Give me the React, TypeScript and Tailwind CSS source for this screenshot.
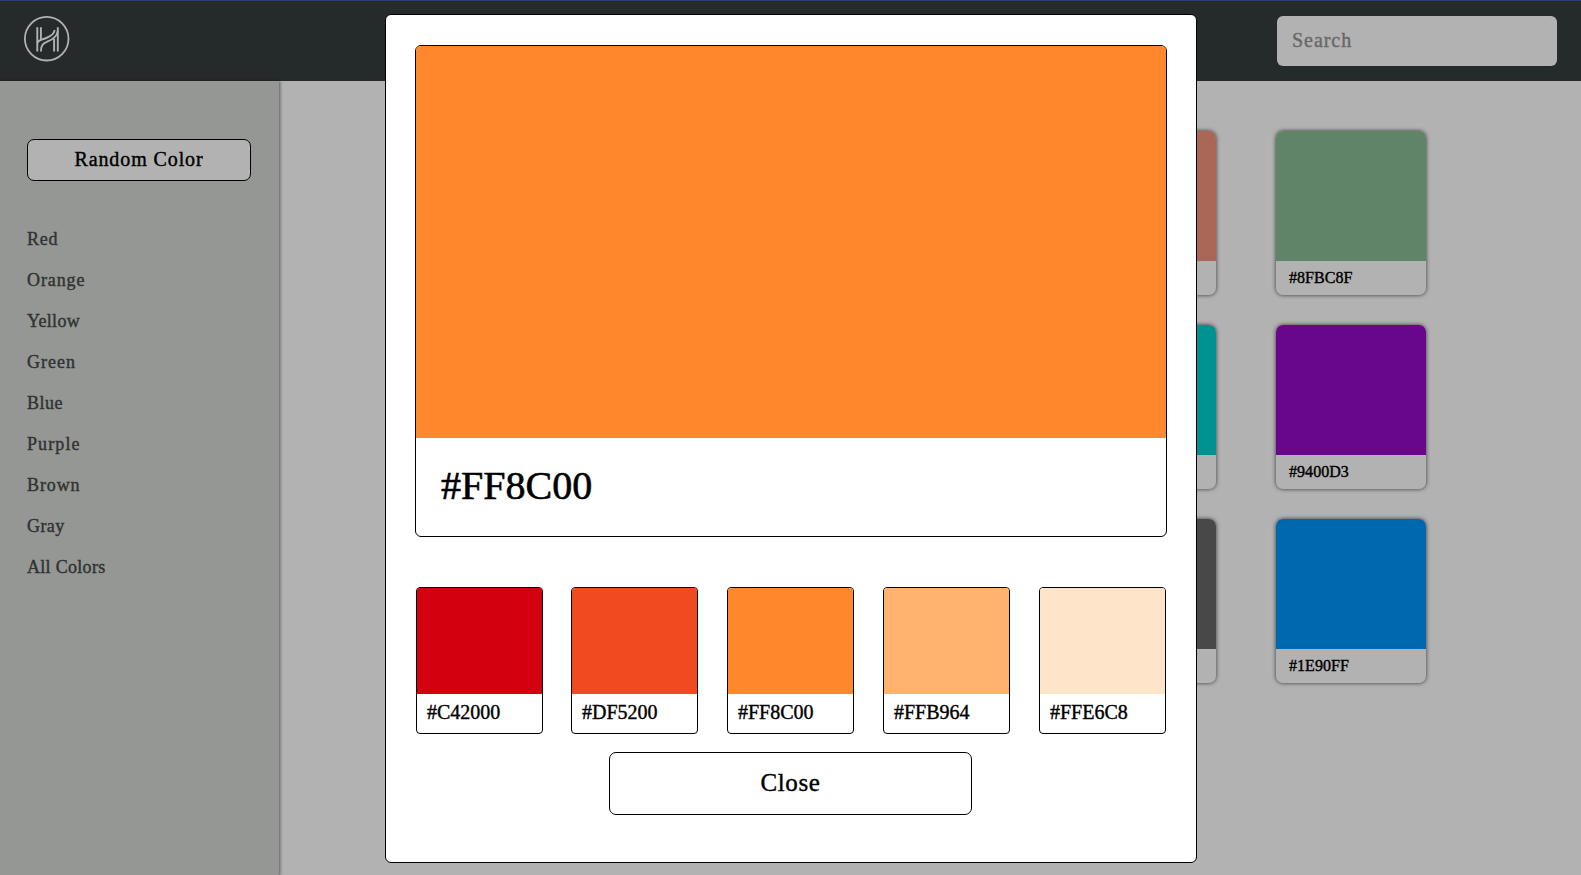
import React from "react";

const navItems = [
  { label: "Red", tracking: "tracking-[0.7px]" },
  { label: "Orange", tracking: "tracking-[0.9px]" },
  { label: "Yellow", tracking: "tracking-[0.3px]" },
  { label: "Green", tracking: "tracking-[1px]" },
  { label: "Blue", tracking: "tracking-[0.5px]" },
  { label: "Purple", tracking: "tracking-[1.1px]" },
  { label: "Brown", tracking: "tracking-[0.9px]" },
  { label: "Gray", tracking: "tracking-[0.4px]" },
  { label: "All Colors", tracking: "tracking-[0.3px]" },
];

const swatches = [
  { fill: "bg-[#f4937b]", code: "" },
  { fill: "bg-[#89bd96]", code: "#8FBC8F" },
  { fill: "bg-[#00d2cf]", code: "" },
  { fill: "bg-[#970bc8]", code: "#9400D3" },
  { fill: "bg-[#686868]", code: "" },
  { fill: "bg-[#0095fb]", code: "#1E90FF" },
];

const shades = [
  { fill: "bg-[#d3000f]", code: "#C42000" },
  { fill: "bg-[#f14a1f]", code: "#DF5200" },
  { fill: "bg-[#ff882d]", code: "#FF8C00" },
  { fill: "bg-[#ffb36f]", code: "#FFB964" },
  { fill: "bg-[#fee5ca]", code: "#FFE6C8" },
];

function Logo() {
  return (
    <svg className="size-[46px]" viewBox="0 0 46 46" fill="none" stroke="white" strokeWidth="1.9">
      <circle cx="22.7" cy="22.7" r="21.8" strokeWidth="1.8" />
      <path d="M13.3 11.2V35.5M16.9 11.2V23.2M30.1 22.5V35.5M33.8 11.2V35.5" />
      <path d="M13.3 27C14.3 23.8 18.5 23.5 22.3 22C27.2 20 30.3 17.5 30.6 14" />
      <path d="M16.9 35.5C16.9 28.8 19.3 27.3 23.8 25.4C29 23.3 33.2 20.5 33.8 15" />
    </svg>
  );
}

function Header() {
  return (
    <header className="flex h-[81px] shrink-0 items-start justify-between border-t border-[#435ba4] bg-[#363d3d] px-6 pt-[15px]">
      <Logo />
      <input
        className="h-[50px] w-[280px] rounded-[6px] bg-white px-[15px] pb-[2px] text-[20px] tracking-[0.95px] outline-none placeholder:text-[#969696] placeholder:opacity-100"
        placeholder="Search"
      />
    </header>
  );
}

function Sidebar() {
  return (
    <aside className="z-10 w-[279px] shrink-0 bg-[#d5d8d5] px-[27px] pt-[58px] shadow-[1px_0_3px_rgba(0,0,0,0.5)]">
      <button className="flex h-[42px] w-[224px] items-center justify-center rounded-[7px] border border-black bg-white pb-[2px] text-[20px] leading-6 tracking-[0.9px]">
        Random Color
      </button>
      <nav className="mt-[38px] flex flex-col">
        {navItems.map((item) => (
          <a key={item.label} className={`h-[41px] text-[18px] leading-[41px] text-[#454a48] ${item.tracking}`}>
            {item.label}
          </a>
        ))}
      </nav>
    </aside>
  );
}

function Gallery() {
  return (
    <main className="flex grow justify-end bg-white pr-[155px] pt-[50px]">
      <div className="grid h-fit grid-cols-[150px_150px] gap-x-[60px] gap-y-[30px]">
        {swatches.map((s) => (
          <div key={s.fill} className="h-[164px] overflow-hidden rounded-[7px] bg-white shadow-[0_0_4px_rgba(0,0,0,0.7)]">
            <div className={`h-[130px] ${s.fill}`} />
            <p className="px-[13px] text-[16px] leading-[33px] tracking-[0.05px]">{s.code}</p>
          </div>
        ))}
      </div>
    </main>
  );
}

function ColorDialog() {
  return (
    <div className="fixed inset-0 z-20 bg-black/30 pl-[385px] pt-[14px]">
      <div
        role="dialog"
        className="flex h-[849px] w-[812px] flex-col items-center rounded-[6px] border border-black bg-white pt-[30px]"
      >
        <section className="h-[492px] w-[752px] overflow-hidden rounded-[6px] border border-black">
          <div className="h-[392px] bg-[#ff882d]" />
          <p className="pl-[25px] pt-[21px] text-[40px] leading-[54px] [-webkit-text-stroke:0.6px]">#FF8C00</p>
        </section>
        <div className="mt-[50px] grid w-[750px] grid-cols-[155px_156px_156px_156px_127px]">
          {shades.map((s) => (
            <div key={s.code} className="h-[147px] w-[127px] overflow-hidden rounded-[4px] border border-black">
              <div className={`h-[106px] ${s.fill}`} />
              <p className="pl-[10px] text-[20px] leading-[37px]">{s.code}</p>
            </div>
          ))}
        </div>
        <button className="mr-px mt-[18px] flex h-[63px] w-[363px] items-center justify-center rounded-[7px] border border-black pb-px text-[25px] leading-8 tracking-[0.6px]">
          Close
        </button>
      </div>
    </div>
  );
}

export default function App() {
  return (
    <div className="flex h-screen w-full flex-col overflow-hidden font-['Source_Serif_Pro','Liberation_Serif',serif] text-black [-webkit-text-stroke:0.4px]">
      <Header />
      <div className="flex grow">
        <Sidebar />
        <Gallery />
      </div>
      <ColorDialog />
    </div>
  );
}
